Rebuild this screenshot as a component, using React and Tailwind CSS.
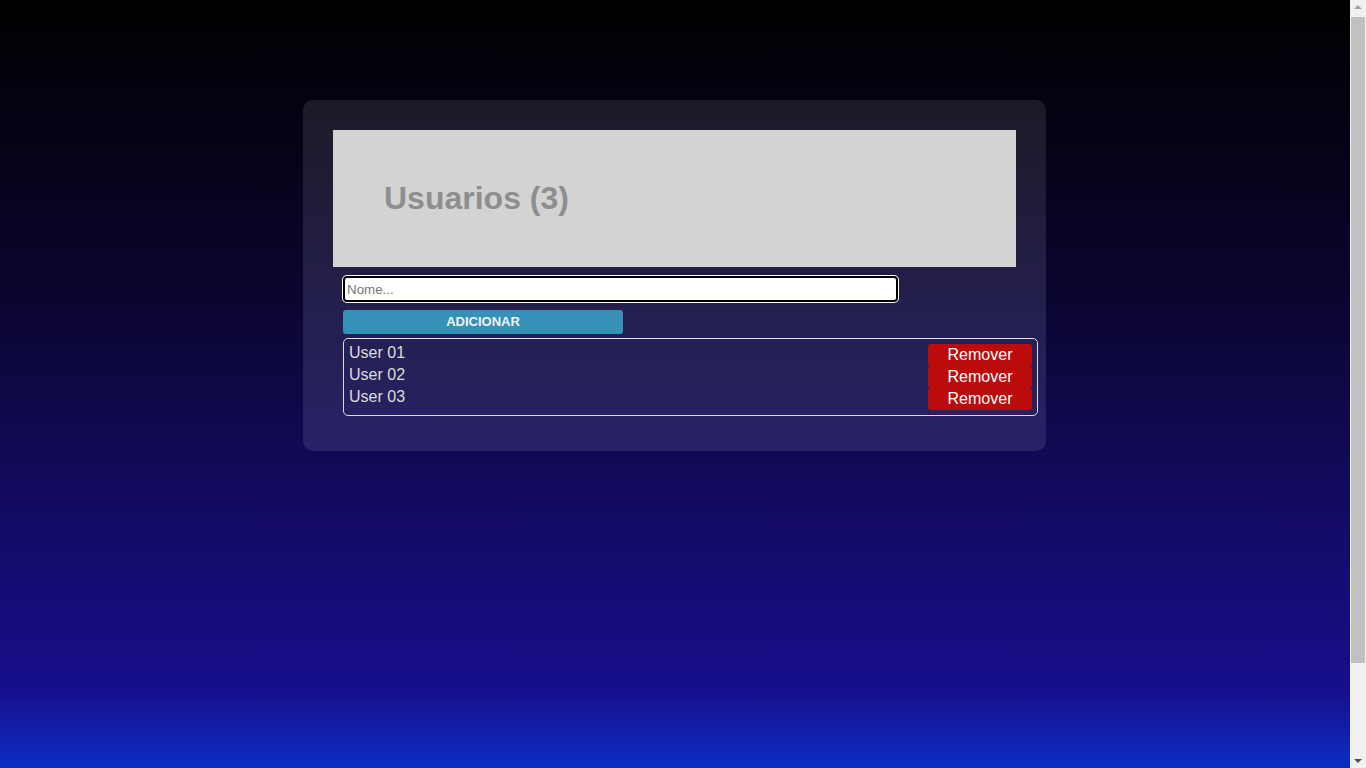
import React, { useState } from 'react';

export default function App() {
  const [users] = useState(['User 01', 'User 02', 'User 03']);
  const [name, setName] = useState('');

  return (
    <div className="box-content h-screen pt-[100px] pb-[5px] pr-[17px] bg-[linear-gradient(to_bottom,#000000_0px,#0b0630_300px,#140c6e_560px,#170e8c_690px,#0c2ec4_768px,#0c2ec4_100%)] font-['Liberation_Sans',Arial,sans-serif]">
      <div className="mx-auto w-[743px] rounded-[10px] bg-[linear-gradient(to_bottom,#1c1a27,#282267)] px-[30px] pt-[30px] pb-[35px]">
        <div className="flex h-[137px] items-center bg-[#d3d3d3] pl-[51px] pb-[2px]">
          <h1 className="text-[32px] font-bold leading-none text-[#8e8e8e]">Usuarios ({users.length})</h1>
        </div>
        <div className="flex flex-col px-[10px]">
          <input
            value={name}
            onChange={(e) => setName(e.target.value)}
            placeholder="Nome..."
            className="mt-[9px] h-[26px] w-[555px] rounded-[4px] border-2 border-black bg-white pl-[2px] text-[13.33px] text-black ring-1 ring-white outline-none placeholder:text-[#767676]"
          />
          <button className="mt-[8px] h-[24px] w-[280px] rounded-[3px] bg-[#3591b8] text-[13px] font-bold text-[#f2f2f2]">
            ADICIONAR
          </button>
          <ul className="mt-[4px] flex w-[695px] flex-col rounded-[5px] border border-[#dcdcdc] p-[5px]">
            {users.map((u) => (
              <li key={u} className="flex items-start justify-between">
                <span className="-mt-[1px] text-[16px] leading-[20px] text-[#dcdcdc]">{u}</span>
                <button className="h-[22px] w-[104px] rounded-[3px] bg-[#bb0b0b] text-[16px] leading-[22px] text-white">
                  Remover
                </button>
              </li>
            ))}
          </ul>
        </div>
      </div>
      <div className="fixed top-0 right-0 flex h-screen w-[16px] flex-col items-center bg-[#f1f1f1]">
        <div className="mt-[5px] h-0 w-0 border-x-[4px] border-b-[4px] border-x-transparent border-b-[#a3a3a3]" />
        <div className="mt-[8px] h-[646px] w-[14px] bg-[#c1c1c1]" />
        <div className="mt-auto mb-[5px] h-0 w-0 border-x-[4px] border-t-[4px] border-x-transparent border-t-[#505050]" />
      </div>
    </div>
  );
}
